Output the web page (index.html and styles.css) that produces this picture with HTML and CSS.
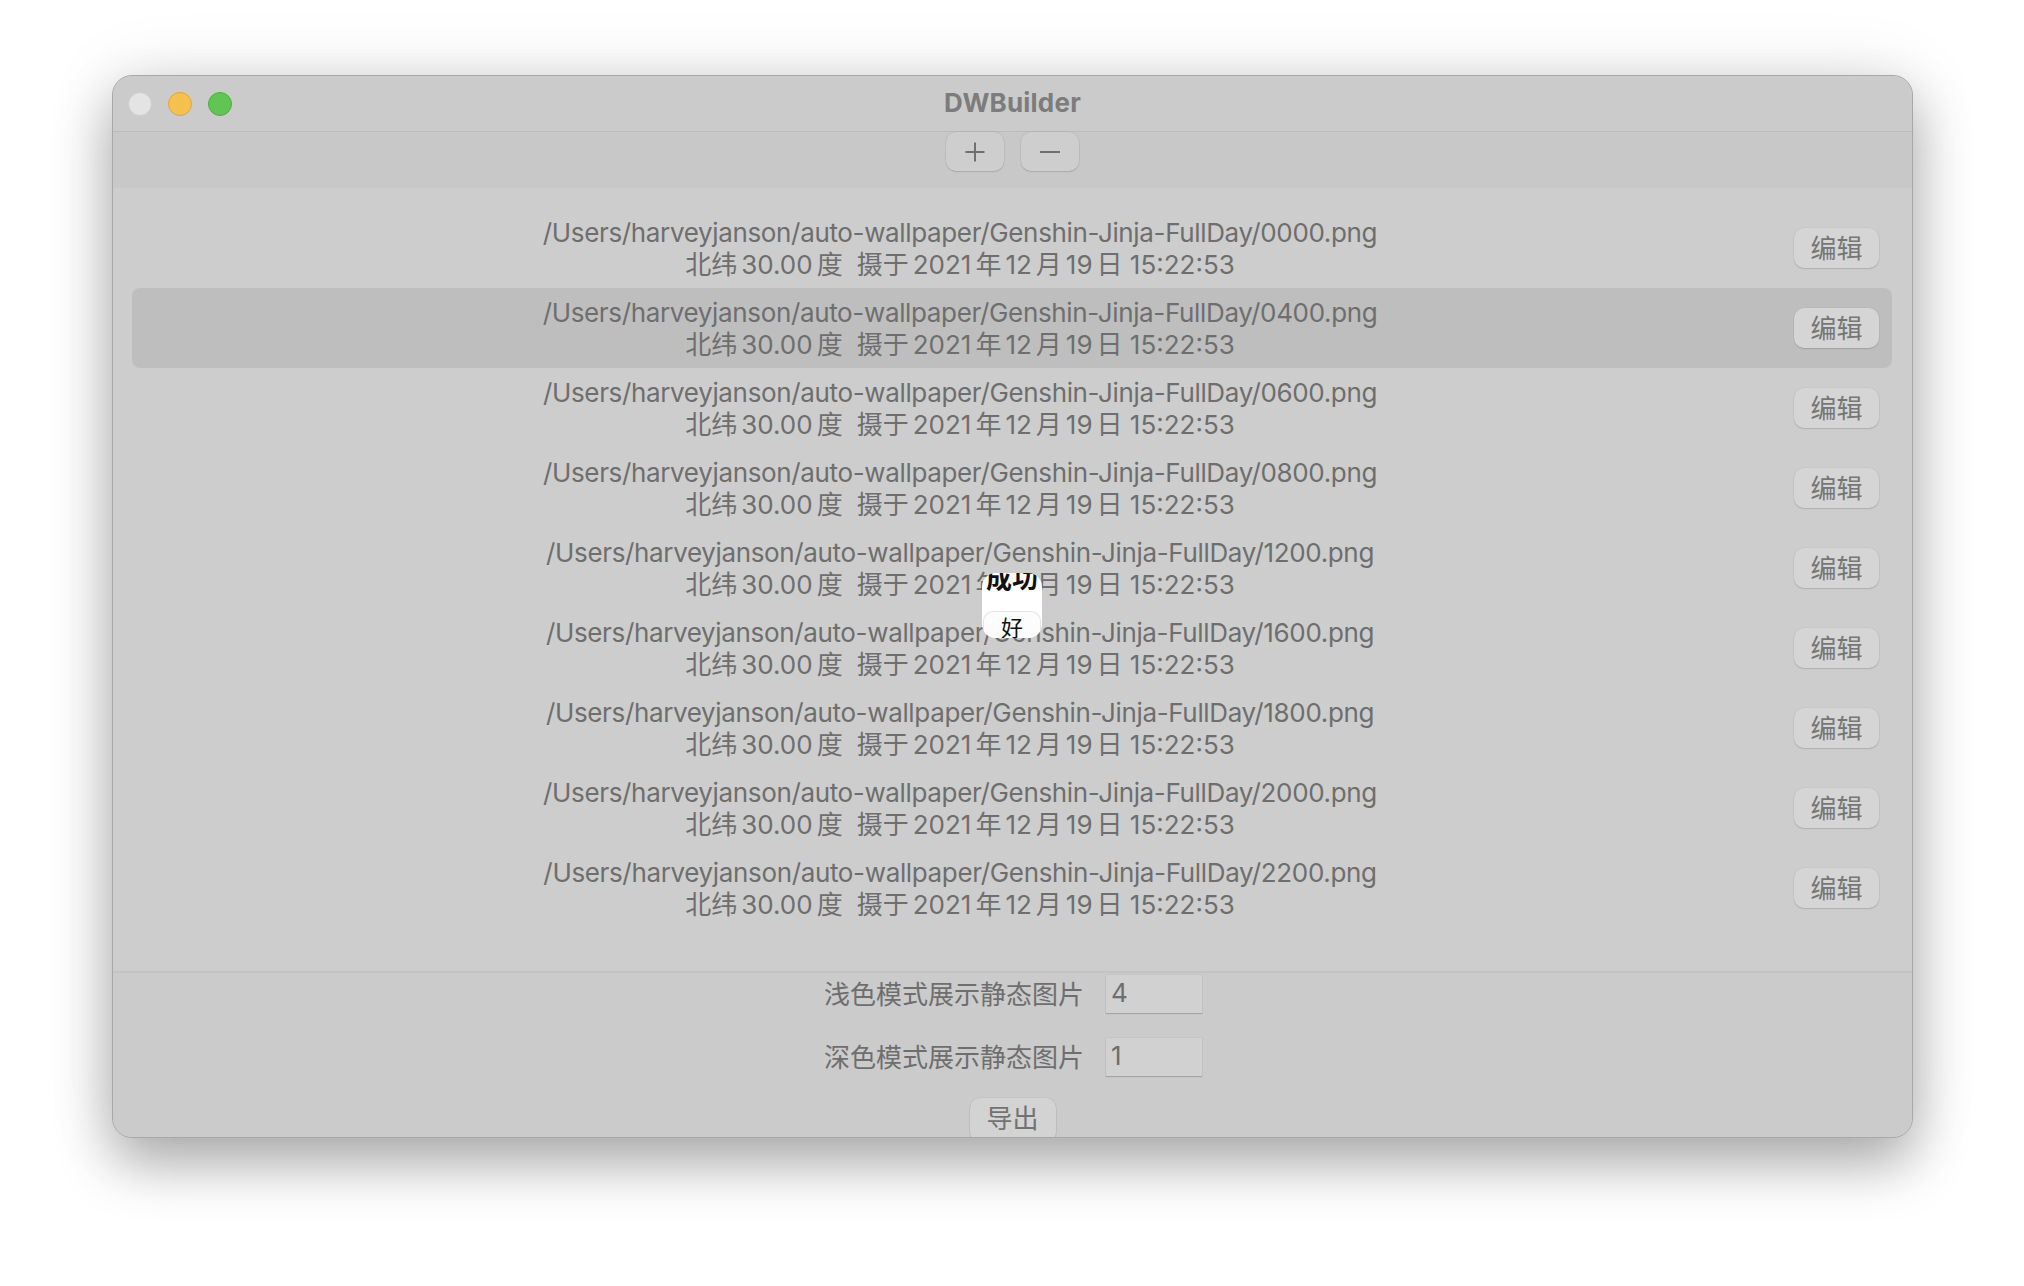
FILE: index.html
```html
<!DOCTYPE html>
<html lang="zh">
<head>
<meta charset="utf-8">
<title>DWBuilder</title>
<link rel="stylesheet" href="styles.css">
</head>
<body>
<div class="window">
  <div class="titlebar">
    <div class="lights">
      <span class="light close"></span>
      <span class="light min"></span>
      <span class="light max"></span>
    </div>
    <div class="title">DWBuilder</div>
    <div></div>
  </div>
  <div class="toolbar">
    <button class="tbtn"><svg width="22" height="22" viewBox="0 0 22 22"><path d="M11 1.5V20.5M1.5 11H20.5" stroke="#6f6f6f" stroke-width="2" fill="none"/></svg></button>
    <button class="tbtn"><svg width="22" height="22" viewBox="0 0 22 22"><path d="M1 11H21" stroke="#6f6f6f" stroke-width="2" fill="none"/></svg></button>
  </div>
  <div class="list">
    <div class="row">
      <div class="info"><div class="path">/Users/harveyjanson/auto-wallpaper/Genshin-Jinja-FullDay/0000.png</div><div class="meta">北纬<span class="n">30.00</span>度<span class="gap"></span>摄于<span class="n">2021</span>年<span class="n">12</span>月<span class="n">19</span>日 15:22:53</div></div>
      <button class="edit">编辑</button>
    </div>
    <div class="row selected">
      <div class="info"><div class="path">/Users/harveyjanson/auto-wallpaper/Genshin-Jinja-FullDay/0400.png</div><div class="meta">北纬<span class="n">30.00</span>度<span class="gap"></span>摄于<span class="n">2021</span>年<span class="n">12</span>月<span class="n">19</span>日 15:22:53</div></div>
      <button class="edit">编辑</button>
    </div>
    <div class="row">
      <div class="info"><div class="path">/Users/harveyjanson/auto-wallpaper/Genshin-Jinja-FullDay/0600.png</div><div class="meta">北纬<span class="n">30.00</span>度<span class="gap"></span>摄于<span class="n">2021</span>年<span class="n">12</span>月<span class="n">19</span>日 15:22:53</div></div>
      <button class="edit">编辑</button>
    </div>
    <div class="row">
      <div class="info"><div class="path">/Users/harveyjanson/auto-wallpaper/Genshin-Jinja-FullDay/0800.png</div><div class="meta">北纬<span class="n">30.00</span>度<span class="gap"></span>摄于<span class="n">2021</span>年<span class="n">12</span>月<span class="n">19</span>日 15:22:53</div></div>
      <button class="edit">编辑</button>
    </div>
    <div class="row">
      <div class="info"><div class="path">/Users/harveyjanson/auto-wallpaper/Genshin-Jinja-FullDay/1200.png</div><div class="meta">北纬<span class="n">30.00</span>度<span class="gap"></span>摄于<span class="n">2021</span>年<span class="n">12</span>月<span class="n">19</span>日 15:22:53</div></div>
      <button class="edit">编辑</button>
    </div>
    <div class="row">
      <div class="info"><div class="path">/Users/harveyjanson/auto-wallpaper/Genshin-Jinja-FullDay/1600.png</div><div class="meta">北纬<span class="n">30.00</span>度<span class="gap"></span>摄于<span class="n">2021</span>年<span class="n">12</span>月<span class="n">19</span>日 15:22:53</div></div>
      <button class="edit">编辑</button>
    </div>
    <div class="row">
      <div class="info"><div class="path">/Users/harveyjanson/auto-wallpaper/Genshin-Jinja-FullDay/1800.png</div><div class="meta">北纬<span class="n">30.00</span>度<span class="gap"></span>摄于<span class="n">2021</span>年<span class="n">12</span>月<span class="n">19</span>日 15:22:53</div></div>
      <button class="edit">编辑</button>
    </div>
    <div class="row">
      <div class="info"><div class="path">/Users/harveyjanson/auto-wallpaper/Genshin-Jinja-FullDay/2000.png</div><div class="meta">北纬<span class="n">30.00</span>度<span class="gap"></span>摄于<span class="n">2021</span>年<span class="n">12</span>月<span class="n">19</span>日 15:22:53</div></div>
      <button class="edit">编辑</button>
    </div>
    <div class="row">
      <div class="info"><div class="path">/Users/harveyjanson/auto-wallpaper/Genshin-Jinja-FullDay/2200.png</div><div class="meta">北纬<span class="n">30.00</span>度<span class="gap"></span>摄于<span class="n">2021</span>年<span class="n">12</span>月<span class="n">19</span>日 15:22:53</div></div>
      <button class="edit">编辑</button>
    </div>
  </div>
  <div class="bottom">
    <div class="field"><span class="label">浅色模式展示静态图片</span><div class="input">4</div></div>
    <div class="field"><span class="label">深色模式展示静态图片</span><div class="input">1</div></div>
    <button class="export">导出</button>
  </div>
  <div class="alert">
    <div class="alert-title"><span>成功</span></div>
    <div class="alert-btn">好</div>
  </div>
</div>
</body>
</html>
```

FILE: styles.css
```css
* {
  box-sizing: border-box;
  margin: 0;
  padding: 0;
}

html, body {
  width: 2024px;
  height: 1286px;
  overflow: hidden;
  background: #ffffff;
}

body {
  font-family: "Inter", "Noto Sans CJK SC", sans-serif;
  color: #6d6d6d;
  padding: 75px 0 0 112px;
}

button {
  font-family: inherit;
  border: none;
  cursor: default;
}

.window {
  position: relative;
  width: 1801px;
  height: 1063px;
  border: 1px solid #a8a8a8;
  border-radius: 20px;
  overflow: hidden;
  display: flex;
  flex-direction: column;
  background: #cdcdcd;
  box-shadow: 0 26px 55px rgba(0, 0, 0, 0.30), 0 0 70px rgba(0, 0, 0, 0.10);
}

.titlebar {
  height: 56px;
  flex: none;
  display: grid;
  grid-template-columns: 1fr auto 1fr;
  align-items: center;
  background: #cbcbcb;
  border-bottom: 1px solid #bcbcbc;
}

.lights {
  display: flex;
  gap: 16px;
  padding-left: 15px;
  padding-top: 1px;
}

.light {
  width: 24px;
  height: 24px;
  border-radius: 50%;
  display: block;
}

.light.close {
  background: #e4e4e4;
  border: 1px solid #cdcdcd;
}

.light.min {
  background: #f6c04f;
  border: 1px solid #dca63c;
}

.light.max {
  background: #61c554;
  border: 1px solid #4fad41;
}

.title {
  font-size: 26px;
  font-weight: 700;
  color: #7c7c7c;
  letter-spacing: 0.2px;
  margin-bottom: 2px;
}

.toolbar {
  height: 56px;
  flex: none;
  display: flex;
  justify-content: center;
  align-items: flex-start;
  gap: 17px;
  background: #c8c8c8;
}

.tbtn {
  width: 58px;
  height: 39px;
  border-radius: 10px;
  background: #cecece;
  box-shadow: 0 1px 1.5px rgba(0, 0, 0, 0.12), 0 0 0 0.5px rgba(0, 0, 0, 0.07);
  display: flex;
  align-items: center;
  justify-content: center;
}

.list {
  flex: 1;
  padding: 20px 20px 0 19px;
  background: #cdcdcd;
}

.row {
  height: 80px;
  display: flex;
  align-items: center;
  border-radius: 8px;
}

.row.selected {
  background: #bebebe;
}

.info {
  flex: 1;
  text-align: center;
  font-size: 26px;
  line-height: 32px;
  color: #6e6e6e;
  padding-top: 2px;
}

.path {
  letter-spacing: -0.35px;
}

.meta .n {
  margin: 0 4px;
}

.meta .gap {
  display: inline-block;
  width: 14px;
}

.edit {
  width: 85px;
  height: 40px;
  margin: 0 13px 0 6px;
  border-radius: 10px;
  background: #d5d5d5;
  box-shadow: 0 1px 1.5px rgba(0, 0, 0, 0.13), 0 0 0 0.5px rgba(0, 0, 0, 0.06);
  font-size: 26px;
  color: #767676;
  font-family: "Noto Sans CJK SC", sans-serif;
  padding-bottom: 7px;
}

.bottom {
  height: 166px;
  flex: none;
  border-top: 2px solid #c3c3c3;
  background: #cbcbcb;
  display: flex;
  flex-direction: column;
  align-items: center;
  padding-top: 2px;
}

.field {
  display: flex;
  align-items: center;
  gap: 22px;
  height: 38px;
  margin-bottom: 25px;
  margin-left: 1px;
}

.field + .field {
  margin-bottom: 22px;
}

.label {
  font-size: 26px;
  color: #6e6e6e;
  font-family: "Noto Sans CJK SC", sans-serif;
  margin-bottom: 3px;
}

.input {
  width: 96px;
  height: 38px;
  background: #d1d1d1;
  box-shadow: 0 1px 1px rgba(0, 0, 0, 0.16), 0 0 0 0.5px rgba(0, 0, 0, 0.06);
  font-size: 26px;
  line-height: 36px;
  padding-left: 5px;
  color: #6e6e6e;
}

.export {
  width: 86px;
  height: 44px;
  flex: none;
  border-radius: 10px;
  background: #d3d3d3;
  box-shadow: 0 1px 1.5px rgba(0, 0, 0, 0.13), 0 0 0 0.5px rgba(0, 0, 0, 0.07);
  font-size: 26px;
  color: #727272;
  font-family: "Noto Sans CJK SC", sans-serif;
  padding-bottom: 9px;
}

.alert {
  position: absolute;
  left: 869px;
  top: 497px;
  width: 60px;
  height: 65px;
  background: #ffffff;
  border-radius: 14px;
  overflow: hidden;
  display: flex;
  flex-direction: column;
  align-items: center;
}

.alert-title {
  height: 38px;
  width: 100%;
  overflow: hidden;
  display: flex;
  justify-content: center;
  flex: none;
}

.alert-title span {
  font-family: "Noto Sans CJK SC", sans-serif;
  font-weight: 700;
  font-size: 26px;
  line-height: 26px;
  color: #111111;
  margin-top: -9px;
  white-space: nowrap;
}

.alert-btn {
  width: 58px;
  flex: 1;
  border: 1px solid #e4e4e4;
  border-bottom: none;
  border-radius: 10px 10px 0 0;
  background: #fcfcfc;
  font-family: "Noto Sans CJK SC", sans-serif;
  font-size: 22px;
  line-height: 24px;
  text-align: center;
  color: #111111;
  padding-top: 2px;
}
```
